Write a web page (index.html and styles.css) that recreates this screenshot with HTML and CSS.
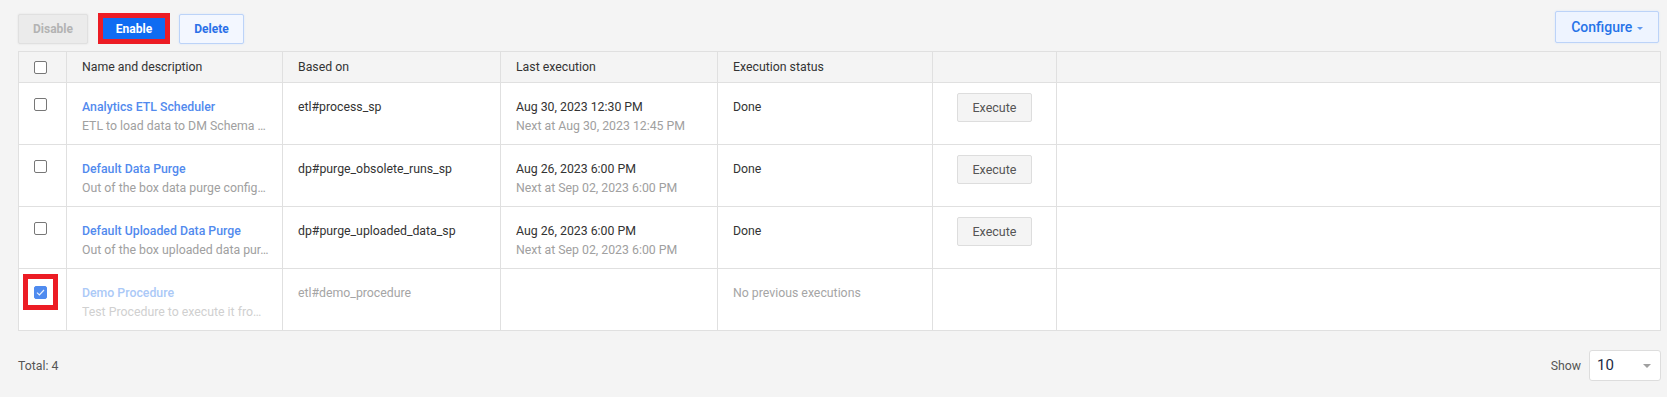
FILE: index.html
```html
<!DOCTYPE html>
<html>
<head>
  <meta charset="UTF-8">
  <title>Procedures</title>
  <link rel="stylesheet" href="styles.css">
</head>
<body>
  <div id="page">
    <div id="toolbar">
      <div class="actions">
        <button class="btn btn-disabled">Disable</button>
        <button class="btn btn-primary marked">Enable</button>
        <button class="btn btn-light">Delete</button>
      </div>
      <button class="btn btn-light btn-configure">Configure <span class="caret"></span></button>
    </div>

    <table id="procedures">
      <colgroup>
        <col style="width:48px">
        <col style="width:216px">
        <col style="width:218px">
        <col style="width:217px">
        <col style="width:215px">
        <col style="width:124px">
        <col>
      </colgroup>
      <thead>
        <tr>
          <th class="check"><span class="box"></span></th>
          <th>Name and description</th>
          <th>Based on</th>
          <th>Last execution</th>
          <th>Execution status</th>
          <th></th>
          <th></th>
        </tr>
      </thead>
      <tbody>
        <tr>
          <td class="check"><span class="box"></span></td>
          <td class="info">
            <div class="name">Analytics ETL Scheduler</div>
            <div class="desc">ETL to load data to DM Schema …</div>
          </td>
          <td>etl#process_sp</td>
          <td>
            <div>Aug 30, 2023 12:30 PM</div>
            <div class="next">Next at Aug 30, 2023 12:45 PM</div>
          </td>
          <td>Done</td>
          <td class="run"><button class="btn-execute">Execute</button></td>
          <td></td>
        </tr>
        <tr>
          <td class="check"><span class="box"></span></td>
          <td class="info">
            <div class="name">Default Data Purge</div>
            <div class="desc">Out of the box data purge config…</div>
          </td>
          <td>dp#purge_obsolete_runs_sp</td>
          <td>
            <div>Aug 26, 2023 6:00 PM</div>
            <div class="next">Next at Sep 02, 2023 6:00 PM</div>
          </td>
          <td>Done</td>
          <td class="run"><button class="btn-execute">Execute</button></td>
          <td></td>
        </tr>
        <tr>
          <td class="check"><span class="box"></span></td>
          <td class="info">
            <div class="name">Default Uploaded Data Purge</div>
            <div class="desc">Out of the box uploaded data pur…</div>
          </td>
          <td>dp#purge_uploaded_data_sp</td>
          <td>
            <div>Aug 26, 2023 6:00 PM</div>
            <div class="next">Next at Sep 02, 2023 6:00 PM</div>
          </td>
          <td>Done</td>
          <td class="run"><button class="btn-execute">Execute</button></td>
          <td></td>
        </tr>
        <tr class="inactive">
          <td class="check"><span class="mark"><span class="box checked"><svg width="9" height="7" viewBox="0 0 9 7"><path d="M1 3.6 L3.4 6 L8 1" fill="none" stroke="#e8f0fd" stroke-width="1.2"/></svg></span></span></td>
          <td class="info">
            <div class="name">Demo Procedure</div>
            <div class="desc">Test Procedure to execute it fro…</div>
          </td>
          <td>etl#demo_procedure</td>
          <td></td>
          <td>No previous executions</td>
          <td></td>
          <td></td>
        </tr>
      </tbody>
    </table>

    <div id="footer">
      <div class="total">Total: 4</div>
      <div class="pager">
        <span class="label">Show</span>
        <div class="select">10 <span class="caret"></span></div>
      </div>
    </div>
  </div>
</body>
</html>
```

FILE: styles.css
```css
html {
	margin:0px;
	padding:0px;
}

body {
	margin:0px;
	padding:0px;
	background:#f4f4f4;
	font-family:Roboto,"Liberation Sans",sans-serif;
	font-size:12.3px;
	color:#333333;
}

#page {
	padding:11px 6px 0px 18px;
}

#toolbar {
	display:flex;
	justify-content:space-between;
	align-items:flex-start;
	height:33px;
}

#toolbar .actions {
	display:flex;
	margin-top:3px;
}

.btn {
	font-family:Roboto,"Liberation Sans",sans-serif;
	font-size:12px;
	font-weight:bold;
	height:30px;
	border-radius:2px;
	border:1px solid #dddddd;
	padding:0px;
	cursor:pointer;
}

.btn-disabled {
	width:70px;
	background:#ebebeb;
	color:#b3b3b3;
	border-color:#e0e0e0;
	box-shadow:0 0 2px #dddddd;
}

.btn-primary {
	width:72px;
	height:31px;
	margin-left:10px;
	margin-top:-1px;
	background:#0f6cf2;
	color:#ffffff;
	border-radius:0px;
}

.marked {
	border:5px solid #ec1c24;
}

.btn-light {
	width:65px;
	margin-left:9px;
	background:#f3f7ff;
	color:#2a70e8;
	border-color:#bcd3f8;
	box-shadow:0 0 2px #d3e2fb;
}

.btn-configure {
	width:104px;
	height:32px;
	font-size:14px;
	font-weight:500;
	background:#eef4ff;
	color:#2673e8;
	margin-right:2px;
}

.caret {
	display:inline-block;
	width:0;
	height:0;
	border-left:3px solid transparent;
	border-right:3px solid transparent;
	border-top:3px solid currentColor;
	vertical-align:middle;
	margin-left:1px;
	opacity:0.7;
}

#procedures {
	width:1643px;
	margin-top:7px;
	border-collapse:collapse;
	table-layout:fixed;
	border:1px solid #e0e0e0;
}

#procedures th {
	height:30px;
	padding:0px 15px;
	text-align:left;
	font-weight:normal;
	color:#333333;
	border:1px solid #e0e0e0;
	background:#f4f4f4;
}

#procedures td {
	padding:15px 15px 8px 15px;
	line-height:19px;
	vertical-align:top;
	background:#ffffff;
	border:1px solid #e0e0e0;
	white-space:nowrap;
	overflow:hidden;
	text-overflow:ellipsis;
	height:38px;
}

#procedures td.info {
	padding-right:6px;
}

#procedures td.run {
	padding-top:10px;
	text-align:center;
}

#procedures td.check, #procedures th.check {
	padding:0px 15px;
}

#procedures td.check {
	padding-top:15px;
}

.box {
	display:block;
	width:11px;
	height:11px;
	border:1px solid #777777;
	border-radius:2px;
	background:#ffffff;
}

.box.checked {
	background:#4f8bef;
	border-color:#4f8bef;
	display:flex;
	align-items:center;
	justify-content:center;
}

.mark {
	display:block;
	width:13px;
	margin:-10px 0px 0px -11px;
	padding:7px 6px 6px 6px;
	border:5px solid #ec1c24;
}

.name {
	color:#528aee;
	font-weight:500;
}

.desc {
	color:#a0a0a0;
	overflow:hidden;
	text-overflow:ellipsis;
}

.next {
	color:#a0a0a0;
}

.btn-execute {
	width:75px;
	height:29px;
	font-family:Roboto,"Liberation Sans",sans-serif;
	font-size:12.5px;
	color:#555555;
	background:#f4f4f4;
	border:1px solid #dddddd;
	border-radius:2px;
}

.inactive td {
	color:#a5a5a5;
}

.inactive .name {
	color:#abc9f7;
}

.inactive .desc {
	color:#d0d0d0;
}

#footer {
	display:flex;
	justify-content:space-between;
	align-items:center;
	margin-top:19px;
}

.total {
	color:#555555;
}

.pager {
	display:flex;
	align-items:center;
}

.pager .label {
	color:#555555;
	margin-right:8px;
}

.select {
	width:56px;
	height:29px;
	line-height:29px;
	padding:0px 7px 0px 7px;
	background:#ffffff;
	border:1px solid #dddddd;
	border-radius:3px;
	font-size:15px;
	color:#1b2a44;
	display:flex;
	justify-content:space-between;
	align-items:center;
}

.select .caret {
	color:#777777;
	border-left-width:4px;
	border-right-width:4px;
	border-top-width:4px;
	margin-right:2px;
}
```
